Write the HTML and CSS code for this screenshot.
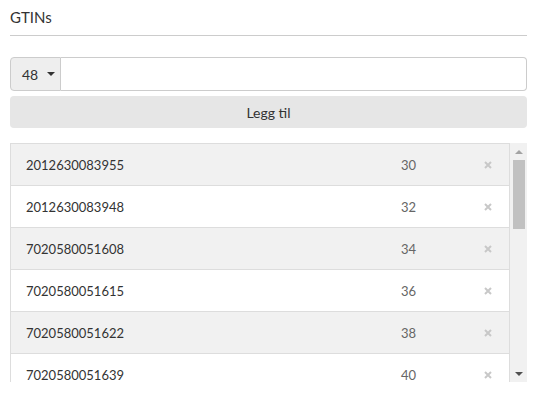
FILE: index.html
```html
<!DOCTYPE html>
<html>
<head>
<meta charset="utf-8">
<link rel="stylesheet" href="styles.css">
</head>
<body>
<div class="page">
  <h4 class="title">GTINs</h4>
  <hr class="divider">
  <div class="input-group">
    <div class="addon">48 <span class="caret"></span></div>
    <input class="field" type="text">
  </div>
  <button class="btn">Legg til</button>
  <div class="list">
    <div class="rows">
      <div class="row"><span class="gtin">2012630083955</span><span class="size">30</span><span class="rm"><svg viewBox="0 0 8 8" width="8" height="8"><path d="M1 1L7 7M7 1L1 7" stroke="#c8c8c8" stroke-width="2"/></svg></span></div>
      <div class="row"><span class="gtin">2012630083948</span><span class="size">32</span><span class="rm"><svg viewBox="0 0 8 8" width="8" height="8"><path d="M1 1L7 7M7 1L1 7" stroke="#c8c8c8" stroke-width="2"/></svg></span></div>
      <div class="row"><span class="gtin">7020580051608</span><span class="size">34</span><span class="rm"><svg viewBox="0 0 8 8" width="8" height="8"><path d="M1 1L7 7M7 1L1 7" stroke="#c8c8c8" stroke-width="2"/></svg></span></div>
      <div class="row"><span class="gtin">7020580051615</span><span class="size">36</span><span class="rm"><svg viewBox="0 0 8 8" width="8" height="8"><path d="M1 1L7 7M7 1L1 7" stroke="#c8c8c8" stroke-width="2"/></svg></span></div>
      <div class="row"><span class="gtin">7020580051622</span><span class="size">38</span><span class="rm"><svg viewBox="0 0 8 8" width="8" height="8"><path d="M1 1L7 7M7 1L1 7" stroke="#c8c8c8" stroke-width="2"/></svg></span></div>
      <div class="row"><span class="gtin">7020580051639</span><span class="size">40</span><span class="rm"><svg viewBox="0 0 8 8" width="8" height="8"><path d="M1 1L7 7M7 1L1 7" stroke="#c8c8c8" stroke-width="2"/></svg></span></div>
      <div class="row"><span class="gtin">7020580051646</span><span class="size">42</span><span class="rm"><svg viewBox="0 0 8 8" width="8" height="8"><path d="M1 1L7 7M7 1L1 7" stroke="#c8c8c8" stroke-width="2"/></svg></span></div>
    </div>
    <div class="scrollbar" aria-hidden="true">
      <div class="sb-btn"><span class="sb-up"></span></div>
      <div class="sb-track"><div class="sb-thumb"></div></div>
      <div class="sb-btn"><span class="sb-down"></span></div>
    </div>
  </div>
</div>
</body>
</html>
```
FILE: styles.css
```css
html, body {
  margin: 0;
  padding: 0;
  background: #fff;
}
.page {
  padding: 7px 8px 0 10px;
  font-family: Lato, "Liberation Sans", sans-serif;
  color: #333;
}
.title {
  margin: 0;
  font-size: 15px;
  line-height: 20px;
  font-weight: 400;
}
.divider {
  margin: 8px 0 21px 0;
  border: 0;
  border-top: 1px solid #ccc;
  height: 0;
}
.input-group {
  display: flex;
  height: 34px;
}
.addon {
  box-sizing: border-box;
  width: 51px;
  flex: none;
  display: flex;
  align-items: center;
  gap: 9px;
  padding-left: 11px;
  background: #eee;
  border: 1px solid #ccc;
  border-radius: 4px 0 0 4px;
  font-size: 14px;
  color: #333;
}
.caret {
  width: 0;
  height: 0;
  border-left: 4px solid transparent;
  border-right: 4px solid transparent;
  border-top: 4px solid #333;
}
.field {
  flex: 1;
  box-sizing: border-box;
  height: 34px;
  margin: 0;
  border: 1px solid #ccc;
  border-left: 0;
  border-radius: 0 4px 4px 0;
  outline: none;
  padding: 0 12px;
}
.btn {
  display: block;
  box-sizing: border-box;
  width: 100%;
  height: 32px;
  margin-top: 5px;
  border: 0;
  border-radius: 4px;
  background: #e6e6e6;
  font-family: Lato, "Liberation Sans", sans-serif;
  font-size: 14px;
  color: #333;
  padding: 0;
}
.list {
  margin-top: 15px;
  height: 239px;
  display: flex;
  overflow: hidden;
}
.rows {
  flex: 1;
  min-width: 0;
  overflow: hidden;
}
.row {
  display: grid;
  grid-template-columns: 1fr 83px 10px;
  align-items: center;
  height: 41px;
  padding: 0 15px;
  border: 1px solid #ddd;
  border-bottom: 0;
  font-size: 13px;
  background: #fff;
}
.row:nth-child(odd) {
  background: #f1f1f1;
}
.gtin {
  color: #333;
}
.size {
  color: #666;
}
.rm {
  display: flex;
  align-items: center;
}
.rm svg {
  display: block;
}
.scrollbar {
  width: 17px;
  flex: none;
  display: flex;
  flex-direction: column;
  background: #f1f1f1;
}
.sb-btn {
  height: 17px;
  flex: none;
  display: flex;
  align-items: center;
  justify-content: center;
}
.sb-up {
  width: 0;
  height: 0;
  border-left: 4px solid transparent;
  border-right: 4px solid transparent;
  border-bottom: 4px solid #a3a3a3;
}
.sb-down {
  width: 0;
  height: 0;
  border-left: 4px solid transparent;
  border-right: 4px solid transparent;
  border-top: 4px solid #505050;
}
.sb-track {
  flex: 1;
}
.sb-thumb {
  height: 69px;
  margin: 0 2px 0 3px;
  background: #c1c1c1;
}
```
